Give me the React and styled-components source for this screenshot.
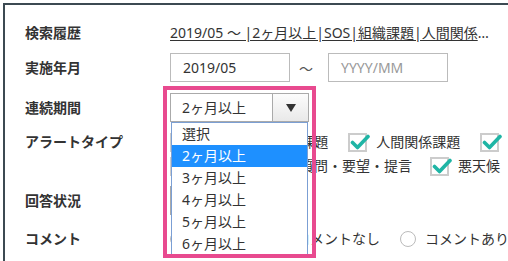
import React from 'react'
import styled, { createGlobalStyle } from 'styled-components'

const GlobalStyle = createGlobalStyle`
  html, body {
    margin: 0;
    padding: 0;
    background: #fff;
    overflow: hidden;
  }
  body {
    font-family: "Noto Sans", "Noto Sans CJK JP", sans-serif;
    font-size: 14px;
    color: #333;
  }
`;

const Frame = styled.div`
  margin: 3px 0 0 3px;
  border-top: 2px solid #3c4a52;
  border-left: 2px solid #3c4a52;
  padding: 16px 0 0 20px;
  height: 300px;
  white-space: nowrap;
`;

const Row = styled.div`
  display: grid;
  grid-template-columns: 145px 1fr;
  align-items: ${p => (p.$top ? 'start' : 'center')};
  margin-top: ${p => p.$mt || 0}px;
  min-height: ${p => p.$h || 24}px;
`;

const Label = styled.div`
  font-weight: bold;
  line-height: 24px;
  color: #333;
`;

const Value = styled.div`
  display: flex;
  align-items: center;
  min-width: 0;
`;

const History = styled.div`
  width: 327px;
  line-height: 24px;
  overflow: hidden;
`;

const HistoryLink = styled.a`
  color: #333;
  text-decoration: underline;
  text-underline-offset: 2px;
`;

const Input = styled.div`
  box-sizing: border-box;
  width: 120px;
  height: 29px;
  border: 1px solid #bbb;
  padding-left: 12px;
  line-height: 27px;
  color: ${p => (p.$placeholder ? '#999' : '#333')};
`;

const Tilde = styled.span`
  margin: 0 15px 0 9px;
  color: #555;
`;

const SelectWrap = styled.div`
  position: relative;
  width: 139px;
  height: 29px;
`;

const SelectBox = styled.div`
  box-sizing: border-box;
  display: flex;
  width: ${p => p.$w || 139}px;
  height: 29px;
  border: 1px solid #aaa;
  background: #fff;
`;

const SelectText = styled.div`
  flex: 1;
  padding-left: 11px;
  line-height: 27px;
`;

const ArrowCell = styled.div`
  width: 35px;
  border-left: 1px solid #aaa;
  background: linear-gradient(#fcfcfc, #e9e9e9);
  display: flex;
  align-items: center;
  justify-content: center;
`;

const Arrow = styled.div`
  width: 0;
  height: 0;
  border-left: 5px solid transparent;
  border-right: 5px solid transparent;
  border-top: 8px solid #333;
  margin-top: 1px;
`;

const Highlight = styled.div`
  position: absolute;
  top: -7px;
  left: -7px;
  right: -7px;
  height: 164px;
  border: 4px solid #e84a8f;
  pointer-events: none;
  z-index: 3;
`;

const OptionList = styled.ul`
  position: absolute;
  top: 29px;
  left: 1px;
  right: 1px;
  margin: 0;
  padding: 0;
  list-style: none;
  border: 1px solid #7b9fd4;
  background: #fff;
  z-index: 2;
`;

const Option = styled.li`
  height: 22px;
  line-height: 22px;
  padding-left: 10px;
  background: ${p => (p.$active ? '#1e90ff' : 'transparent')};
  color: ${p => (p.$active ? '#fff' : '#333')};
`;

const CheckLines = styled.div`
  display: flex;
  flex-direction: column;
`;

const CheckLine = styled.div`
  display: flex;
  align-items: center;
  height: 24px;
  gap: ${p => p.$gap || 20}px;
`;

const Item = styled.label`
  display: flex;
  align-items: center;
  gap: 9px;
  line-height: 24px;
`;

const Box = styled.span`
  position: relative;
  box-sizing: border-box;
  width: 19px;
  height: 19px;
  border: 2px solid #ccc;
  background: #fff;
  flex: none;

  svg {
    position: absolute;
    left: 0;
    top: -1px;
  }
`;

const Radio = styled.span`
  box-sizing: border-box;
  width: 16px;
  height: 16px;
  border: 1px solid #bbb;
  border-radius: 50%;
  background: #fff;
  flex: none;
`;

const RadioLine = styled.div`
  display: flex;
  align-items: center;
  gap: 20px;
`;

const Check = ({ children }) => (
  <Item>
    <Box>
      <svg width="20" height="17" viewBox="0 0 20 17">
        <path d="M2.5 8.5 L7.5 13.5 L18 2.5" fill="none" stroke="#1fb5a5" strokeWidth="3.6" strokeLinecap="round" strokeLinejoin="round" />
      </svg>
    </Box>
    <span>{children}</span>
  </Item>
)

const RadioItem = ({ children }) => (
  <Item>
    <Radio />
    <span>{children}</span>
  </Item>
)

const options = ['選択', '2ヶ月以上', '3ヶ月以上', '4ヶ月以上', '5ヶ月以上', '6ヶ月以上']

const App = () => (
  <>
    <GlobalStyle />
    <Frame>
      <Row>
        <Label>検索履歴</Label>
        <Value>
          <History>
            <HistoryLink>2019/05 ～ |2ヶ月以上|SOS|組織課題|人間関係</HistoryLink>…
          </History>
        </Value>
      </Row>

      <Row $mt={8} $h={29}>
        <Label>実施年月</Label>
        <Value>
          <Input>2019/05</Input>
          <Tilde>～</Tilde>
          <Input $placeholder>YYYY/MM</Input>
        </Value>
      </Row>

      <Row $mt={11} $h={29}>
        <Label>連続期間</Label>
        <Value>
          <SelectWrap>
            <SelectBox>
              <SelectText>2ヶ月以上</SelectText>
              <ArrowCell><Arrow /></ArrowCell>
            </SelectBox>
            <OptionList>
              {options.map(o => (
                <Option key={o} $active={o === '2ヶ月以上'}>{o}</Option>
              ))}
            </OptionList>
            <Highlight />
          </SelectWrap>
        </Value>
      </Row>

      <Row $mt={8} $top>
        <Label>アラートタイプ</Label>
        <CheckLines>
          <CheckLine>
            <Check>SOS</Check>
            <Check>組織課題</Check>
            <Check>人間関係課題</Check>
            <Check>業務課題</Check>
          </CheckLine>
          <CheckLine $gap={18}>
            <Check>体調不良</Check>
            <Check>質問・要望・提言</Check>
            <Check>悪天候</Check>
          </CheckLine>
        </CheckLines>
      </Row>

      <Row $mt={8} $h={29}>
        <Label>回答状況</Label>
        <Value>
          <SelectBox $w={120}>
            <SelectText>選択</SelectText>
          </SelectBox>
        </Value>
      </Row>

      <Row $mt={12}>
        <Label>コメント</Label>
        <RadioLine>
          <RadioItem>指定なし</RadioItem>
          <RadioItem>コメントなし</RadioItem>
          <RadioItem>コメントあり</RadioItem>
        </RadioLine>
      </Row>
    </Frame>
  </>
)

export default App
